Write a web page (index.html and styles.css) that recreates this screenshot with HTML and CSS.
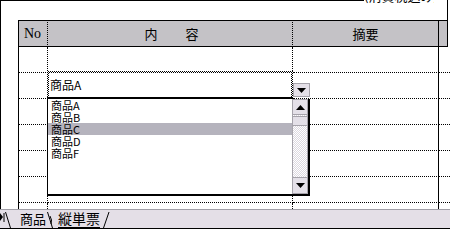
FILE: index.html
```html
<!DOCTYPE html>
<html lang="ja">
<head>
<meta charset="utf-8">
<link rel="stylesheet" href="styles.css">
</head>
<body>
<div class="sheet">
  <div class="caption">
    <div class="cap-line"></div>
    <div class="cap-text"><span>(消費税込み)</span></div>
    <div class="cap-rest"></div>
  </div>
  <div class="grid">
    <div class="row head">
      <div class="c no">No</div>
      <div class="c item"><span>内</span><span>容</span></div>
      <div class="c memo">摘要</div>
      <div class="c x"></div>
    </div>
    <div class="row"><div class="c no"></div><div class="c item"></div><div class="c memo"></div><div class="c x"></div></div>
    <div class="row"><div class="c no"></div><div class="c item"></div><div class="c memo"></div><div class="c x"></div></div>
    <div class="row"><div class="c no"></div><div class="c item"></div><div class="c memo"></div><div class="c x"></div></div>
    <div class="row"><div class="c no"></div><div class="c item"></div><div class="c memo"></div><div class="c x"></div></div>
    <div class="row"><div class="c no"></div><div class="c item"></div><div class="c memo"></div><div class="c x"></div></div>
    <div class="row"><div class="c no"></div><div class="c item"></div><div class="c memo"></div><div class="c x"></div></div>
    <div class="row"><div class="c no"></div><div class="c item"></div><div class="c memo"></div><div class="c x"></div></div>
  </div>

  <div class="combo"><div class="combo-in">商品A</div></div>
  <div class="dropbtn"><svg width="9" height="5" viewBox="0 0 9 5"><polygon points="0,0 9,0 4.5,5" fill="#000"/></svg></div>
  <div class="list">
    <div class="items">
      <div class="opt">商品A</div>
      <div class="opt">商品B</div>
      <div class="opt sel">商品C</div>
      <div class="opt">商品D</div>
      <div class="opt">商品F</div>
    </div>
    <div class="sbar">
      <div class="sbtn"><svg width="9" height="5" viewBox="0 0 9 5"><polygon points="0,5 9,5 4.5,0" fill="#000"/></svg></div>
      <div class="thumb"></div>
      <div class="spacer"></div>
      <div class="sbtn down"><svg width="9" height="5" viewBox="0 0 9 5"><polygon points="0,0 9,0 4.5,5" fill="#000"/></svg></div>
    </div>
  </div>
</div>
<div class="tabbar">
  <svg class="nav" width="5" height="18" viewBox="0 0 5 18"><polygon points="0,3 3,7 0,11" fill="#000"/><rect x="3.5" y="3" width="1" height="9" fill="#000"/></svg>
  <svg class="slant" width="7" height="18" viewBox="0 0 7 18"><line x1="0.5" y1="2" x2="5.5" y2="18" stroke="#000" stroke-width="1"/></svg>
  <span class="tab">商品</span>
  <svg class="slant2" width="7" height="18" viewBox="0 0 7 18"><line x1="0.5" y1="2" x2="5.5" y2="18" stroke="#000" stroke-width="1"/><path d="M3 6 Q5.5 10 4 14" fill="none" stroke="#000" stroke-width="1"/></svg>
  <span class="tab active">縦単票</span>
  <svg class="slant3" width="8" height="18" viewBox="0 0 8 18"><line x1="7" y1="2" x2="1.5" y2="18" stroke="#000" stroke-width="1"/></svg>
</div>
</body>
</html>
```
FILE: styles.css
```css
html, body {
  margin: 0;
  padding: 0;
}
body {
  width: 450px;
  height: 229px;
  overflow: hidden;
  background: #fff;
  color: #000;
  font-family: "Noto Sans CJK JP", "Liberation Sans", sans-serif;
}
.sheet {
  position: relative;
  height: 209px;
  border-left: 1px solid #000;
  overflow: hidden;
}
.caption {
  display: flex;
  height: 20px;
  width: 446px;
  border-right: 1px solid #000;
}
.cap-line {
  width: 363px;
  border-top: 1px solid #000;
}
.cap-text {
  width: 70px;
  overflow: hidden;
  font-size: 13px;
  line-height: 13px;
  white-space: nowrap;
}
.cap-text span {
  display: block;
  margin-top: -11px;
}
.cap-rest {
  flex: 1;
}
.grid {
  margin-left: 17px;
  border-left: 1px solid #000;
}
.row {
  display: flex;
}
.c {
  height: 25px;
  border-bottom: 1px dotted #000;
}
.head .c {
  border-top: 1px solid #000;
  border-bottom: 1px solid #000;
  background: #c4c2c6;
  display: flex;
  align-items: center;
  font-size: 13px;
}
.no {
  width: 28px;
  border-right: 1px dotted #000;
}
.item {
  width: 244px;
  border-right: 1px dotted #000;
}
.memo {
  width: 145px;
  border-right: 1px solid #000;
}
.x {
  flex: 1;
}
.head .x {
  flex: none;
  width: 8px;
  border-right: 1px solid #000;
}
.head .no {
  font-family: "Liberation Serif", serif;
  font-size: 14px;
  padding-left: 5px;
  width: 23px;
}
.head .item {
  justify-content: center;
  gap: 28px;
  padding-left: 3px;
  width: 241px;
}
.head .memo {
  justify-content: center;
}
.combo {
  position: absolute;
  left: 46px;
  top: 71px;
  width: 246px;
  height: 28px;
  box-sizing: border-box;
  padding: 2px 2px 0 2px;
  border-bottom: 2px solid #000;
  background: repeating-conic-gradient(#000 0 25%, #fff 0 50%) 0 0 / 2px 2px;
}
.combo-in {
  background: #fff;
  height: 24px;
  font-size: 12px;
  line-height: 24px;
  padding-left: 1px;
}
.dropbtn {
  position: absolute;
  left: 292px;
  top: 83px;
  width: 17px;
  height: 14px;
  box-sizing: border-box;
  border: 1px solid #a6a3ab;
  background: #e4e0e8;
  display: flex;
  align-items: center;
  justify-content: center;
}
.list {
  position: absolute;
  left: 46px;
  top: 99px;
  width: 263px;
  height: 97px;
  box-sizing: border-box;
  border-left: 1px solid #000;
  border-right: 2px solid #000;
  border-bottom: 2px solid #000;
  background: #fff;
  display: flex;
}
.items {
  flex: 1;
  font-size: 11px;
  line-height: 12px;
}
.opt {
  height: 12px;
  padding-left: 3px;
  white-space: nowrap;
}
.opt.sel {
  background: #b5b3bd;
}
.sbar {
  width: 16px;
  box-sizing: border-box;
  border-left: 1px solid #a6a3ab;
  border-right: 1px solid #a6a3ab;
  background: repeating-conic-gradient(#dcd8e0 0 25%, #fff 0 50%) 0 0 / 2px 2px;
  display: flex;
  flex-direction: column;
}
.sbtn {
  height: 16px;
  box-sizing: border-box;
  border-top: 1px solid #a6a3ab;
  border-bottom: 1px solid #a6a3ab;
  background: #e4e0e8;
  display: flex;
  align-items: center;
  justify-content: center;
}
.sbtn.down {
  height: 17px;
}
.thumb {
  height: 10px;
  margin-top: 1px;
  box-sizing: border-box;
  border-top: 1px solid #a6a3ab;
  border-bottom: 1px solid #a6a3ab;
  background: #e4e0e8;
}
.spacer {
  flex: 1;
}
.tabbar {
  height: 18px;
  border-top: 1px solid #a09ea6;
  border-bottom: 1px solid #000;
  background: #e4dfe7;
  display: flex;
}
.nav {
  display: block;
}
.slant, .slant2, .slant3 {
  display: block;
  flex: none;
}
.tab {
  display: block;
  font-size: 13px;
  line-height: 17px;
  height: 17px;
  white-space: nowrap;
}
.tab:first-of-type {
  margin-left: 8px;
  margin-right: 1px;
}
.tab.active {
  font-size: 14px;
  margin-left: 4px;
  margin-right: 2px;
  border-bottom: 1px solid #000;
}
```
